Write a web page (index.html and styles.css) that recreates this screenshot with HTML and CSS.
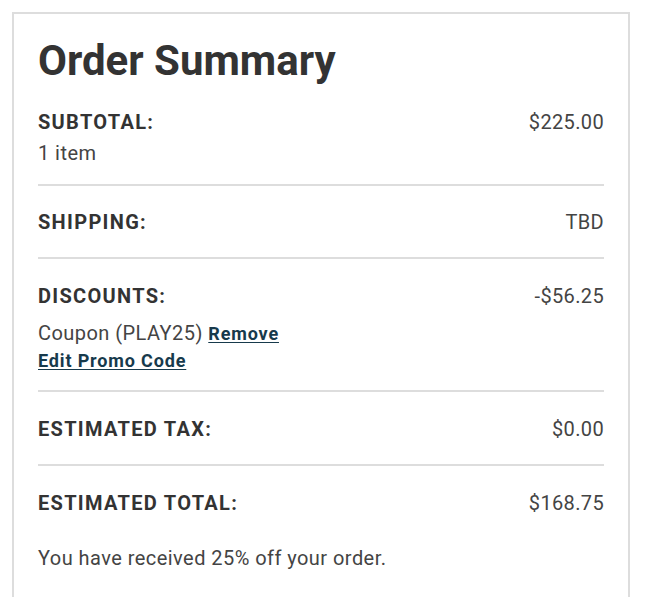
FILE: index.html
```html
<!DOCTYPE html>
<html lang="en">
<head>
<meta charset="utf-8">
<title>Order Summary</title>
<link rel="stylesheet" href="styles.css">
</head>
<body>
<section class="summary">
  <h1 class="summary-title">Order Summary</h1>

  <div class="line line-subtotal">
    <div class="row">
      <span class="label">SUBTOTAL:</span>
      <span class="value">$225.00</span>
    </div>
    <div class="sub">1 item</div>
  </div>

  <div class="line line-shipping">
    <div class="row">
      <span class="label">SHIPPING:</span>
      <span class="value">TBD</span>
    </div>
  </div>

  <div class="line line-discounts">
    <div class="row">
      <span class="label">DISCOUNTS:</span>
      <span class="value">-$56.25</span>
    </div>
    <div class="sub coupon">Coupon (PLAY25) <a href="#" class="link">Remove</a></div>
    <div class="promo"><a href="#" class="link">Edit Promo Code</a></div>
  </div>

  <div class="line line-tax">
    <div class="row">
      <span class="label">ESTIMATED TAX:</span>
      <span class="value">$0.00</span>
    </div>
  </div>

  <div class="line line-total">
    <div class="row">
      <span class="label">ESTIMATED TOTAL:</span>
      <span class="value">$168.75</span>
    </div>
    <p class="note">You have received 25% off your order.</p>
  </div>
</section>
</body>
</html>
```

FILE: styles.css
```css
* { box-sizing: border-box; }

html, body {
  background: #ffffff;
}

body {
  margin: 12px 0 0 12px;
  font-family: Roboto, "Liberation Sans", Arial, sans-serif;
  color: #333333;
}

.summary {
  width: 618px;
  border: 2px solid #dddddd;
  border-bottom: none;
  padding: 0 24px 40px;
}

.summary-title {
  margin: 23px 0 0;
  font-size: 42px;
  line-height: 48px;
  font-weight: 700;
  color: #333333;
}

.line {
  padding: 25px 0 21px;
  border-bottom: 2px solid #dddddd;
}

.line-subtotal {
  padding-top: 25px;
  padding-bottom: 19px;
}

.line-shipping {
  padding-top: 24px;
  padding-bottom: 23px;
}

.line-discounts {
  padding-top: 25px;
  padding-bottom: 16px;
}

.line-tax {
  padding-top: 25px;
  padding-bottom: 23px;
}

.line-total {
  padding-top: 25px;
  border-bottom: none;
}

.row {
  display: flex;
  justify-content: space-between;
  align-items: baseline;
}

.label {
  font-size: 20px;
  line-height: 24px;
  font-weight: 700;
  letter-spacing: 1.3px;
  color: #333333;
}

.value {
  font-size: 20px;
  line-height: 24px;
  letter-spacing: 0.35px;
  color: #444444;
}

.sub {
  margin-top: 7px;
  font-size: 20px;
  line-height: 24px;
  letter-spacing: 0.45px;
  color: #444444;
}

.coupon {
  margin-top: 13px;
}

.promo {
  margin-top: 3px;
  line-height: 24px;
}

.link {
  font-size: 18px;
  font-weight: 700;
  letter-spacing: 0.85px;
  color: #173a4c;
  text-decoration: underline;
  text-underline-offset: 2px;
}

.note {
  margin: 31px 0 0;
  font-size: 20px;
  line-height: 24px;
  letter-spacing: 0.45px;
  color: #444444;
}
```
